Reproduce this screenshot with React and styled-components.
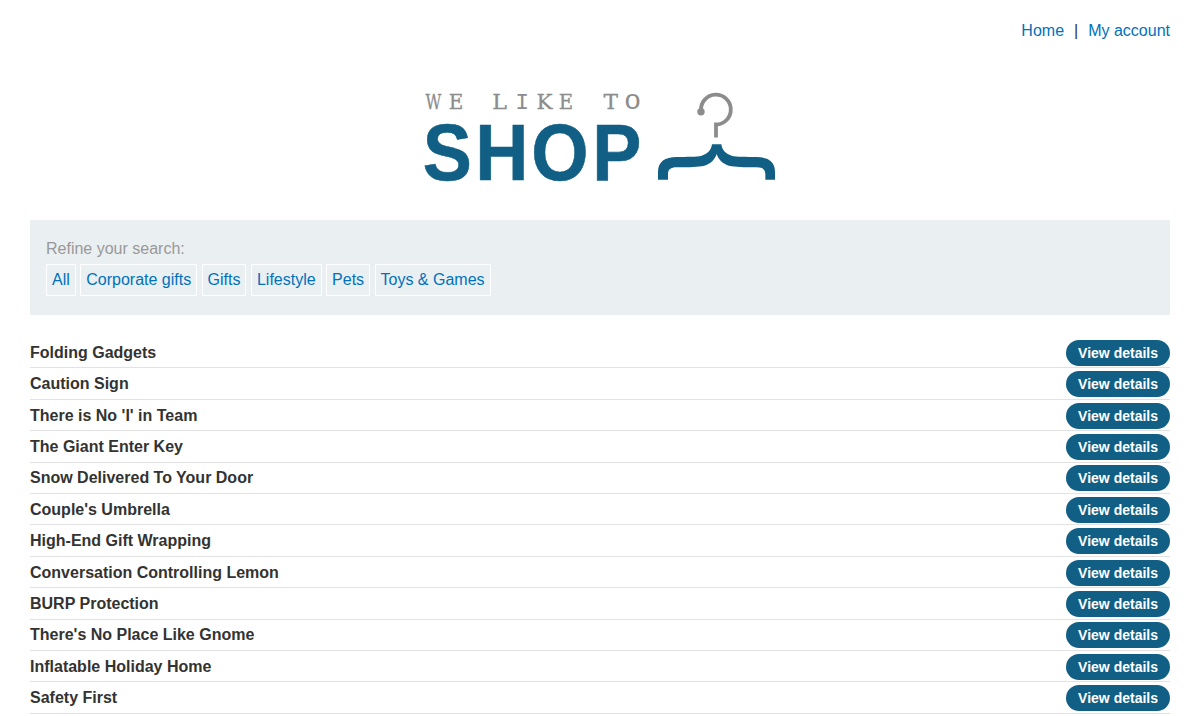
import React from "react";
import styled, { createGlobalStyle } from "styled-components";

const GlobalStyle = createGlobalStyle`
  * { box-sizing: border-box; }
  html { background: #fff; overflow: hidden; }
  body {
    margin: 0;
    color: #333332;
    font: 16px/22px "Liberation Sans", Arial, sans-serif;
  }
`;

const Page = styled.div`
  padding: 20px 20px 0 30px;
`;

const Nav = styled.nav`
  display: flex;
  justify-content: flex-end;
  gap: 10px;
  height: 22px;
`;

const Link = styled.a`
  color: #0071bc;
  text-decoration: none;
`;

const Banner = styled.header`
  display: flex;
  justify-content: center;
  padding: 38px 0 30px;
`;

const Logo = styled.svg`
  display: block;
  width: 360px;
  height: 110px;
  overflow: visible;
`;

const Filters = styled.section`
  height: 95px;
  padding: 18px 16px 0;
  background: #eaeff2;
`;

const FilterLabel = styled.div`
  height: 26px;
  color: #999;
`;

const FilterList = styled.div`
  display: flex;
  gap: 4.45px;
`;

const Filter = styled(Link)`
  height: 32px;
  padding: 4px 5px;
  border: 1px solid #fff;
`;

const Products = styled.main`
  padding-top: 22px;
`;

const Product = styled.div`
  display: flex;
  justify-content: space-between;
  align-items: flex-start;
  height: 31.4px;
  padding-top: 2.8px;
  border-bottom: 1px solid #e2e2e2;
`;

const ProductName = styled.h3`
  margin: 0;
  padding-top: 2px;
  font-size: 16px;
  line-height: 22px;
  font-weight: bold;
`;

const DetailsButton = styled.a`
  height: 26px;
  padding: 0 12px;
  border-radius: 13px;
  background: #115f84;
  color: #fff;
  font-size: 14px;
  font-weight: bold;
  line-height: 26px;
`;

const Tagline = styled.text`
  font-family: "DejaVu Serif", serif;
  font-size: 20.5px;
  fill: #8c8c8c;
  stroke: #8c8c8c;
  stroke-width: 0.3px;
`;

const MonoGlyph = styled.tspan`
  font-family: "Liberation Mono", monospace;
  font-size: 22.5px;
  stroke: none;
`;

const Wordmark = styled.text`
  font-family: "Liberation Sans", Arial, sans-serif;
  font-size: 80.5px;
  font-weight: bold;
  fill: #115f84;
  stroke: #115f84;
  stroke-width: 0.6px;
`;

const categories = ["All", "Corporate gifts", "Gifts", "Lifestyle", "Pets", "Toys & Games"];

const products = [
  "Folding Gadgets",
  "Caution Sign",
  "There is No 'I' in Team",
  "The Giant Enter Key",
  "Snow Delivered To Your Door",
  "Couple's Umbrella",
  "High-End Gift Wrapping",
  "Conversation Controlling Lemon",
  "BURP Protection",
  "There's No Place Like Gnome",
  "Inflatable Holiday Home",
  "Safety First",
];

function ShopLogo() {
  const fit = { lengthAdjust: "spacingAndGlyphs" };
  return (
    <Logo viewBox="420 80 360 110" role="img" aria-label="We like to shop">
      <Tagline y="108.8">
        <tspan x="425.6" textLength="15.8" {...fit}>W</tspan>
        <tspan x="448.8" textLength="14.6" {...fit}>E</tspan>{" "}
        <tspan x="492.3" textLength="14.7" {...fit}>L</tspan>
        <MonoGlyph x="515.2" textLength="13.9" {...fit}>I</MonoGlyph>
        <tspan x="536.5" textLength="16" {...fit}>K</tspan>
        <tspan x="558.8" textLength="14.4" {...fit}>E</tspan>{" "}
        <tspan x="603.4" textLength="14.5" {...fit}>T</tspan>
        <MonoGlyph x="624.4" textLength="16.2" {...fit}>O</MonoGlyph>
      </Tagline>
      <Wordmark transform="translate(422 179.6) scale(.915 1)" x="0.9 58.1 119.4 186.2">
        SHOP
      </Wordmark>
      <path
        d="M701 110.5A14.9 14.9 0 1 1 716 124.5V137.4"
        fill="none"
        stroke="#8c8c8c"
        strokeWidth="3.8"
      />
      <circle cx="701" cy="111.7" r="3.7" fill="#8c8c8c" />
      <path
        transform="translate(650 80) scale(.33333)"
        d="M24 299V275C24 245 45 231 80 231C110 230 140 231 155 227C175 222 184 208 186 193H214C216 208 225 222 245 227C260 231 290 230 320 231C355 231 375 245 375 275V299H346V283C346 268 337 262 320 262C295 262 265 262 245 259C222 255 207 242 200 222C193 242 178 255 155 259C135 262 105 262 80 262C62 262 54 268 54 283V299Z"
        fill="#115f84"
      />
    </Logo>
  );
}

export default function App() {
  return (
    <Page>
      <GlobalStyle />
      <Nav>
        <Link>Home</Link>
        <span>|</span>
        <Link>My account</Link>
      </Nav>
      <Banner>
        <ShopLogo />
      </Banner>
      <Filters>
        <FilterLabel>Refine your search:</FilterLabel>
        <FilterList>
          {categories.map((name) => (
            <Filter key={name}>{name}</Filter>
          ))}
        </FilterList>
      </Filters>
      <Products>
        {products.map((name) => (
          <Product key={name}>
            <ProductName>{name}</ProductName>
            <DetailsButton>View details</DetailsButton>
          </Product>
        ))}
      </Products>
    </Page>
  );
}
